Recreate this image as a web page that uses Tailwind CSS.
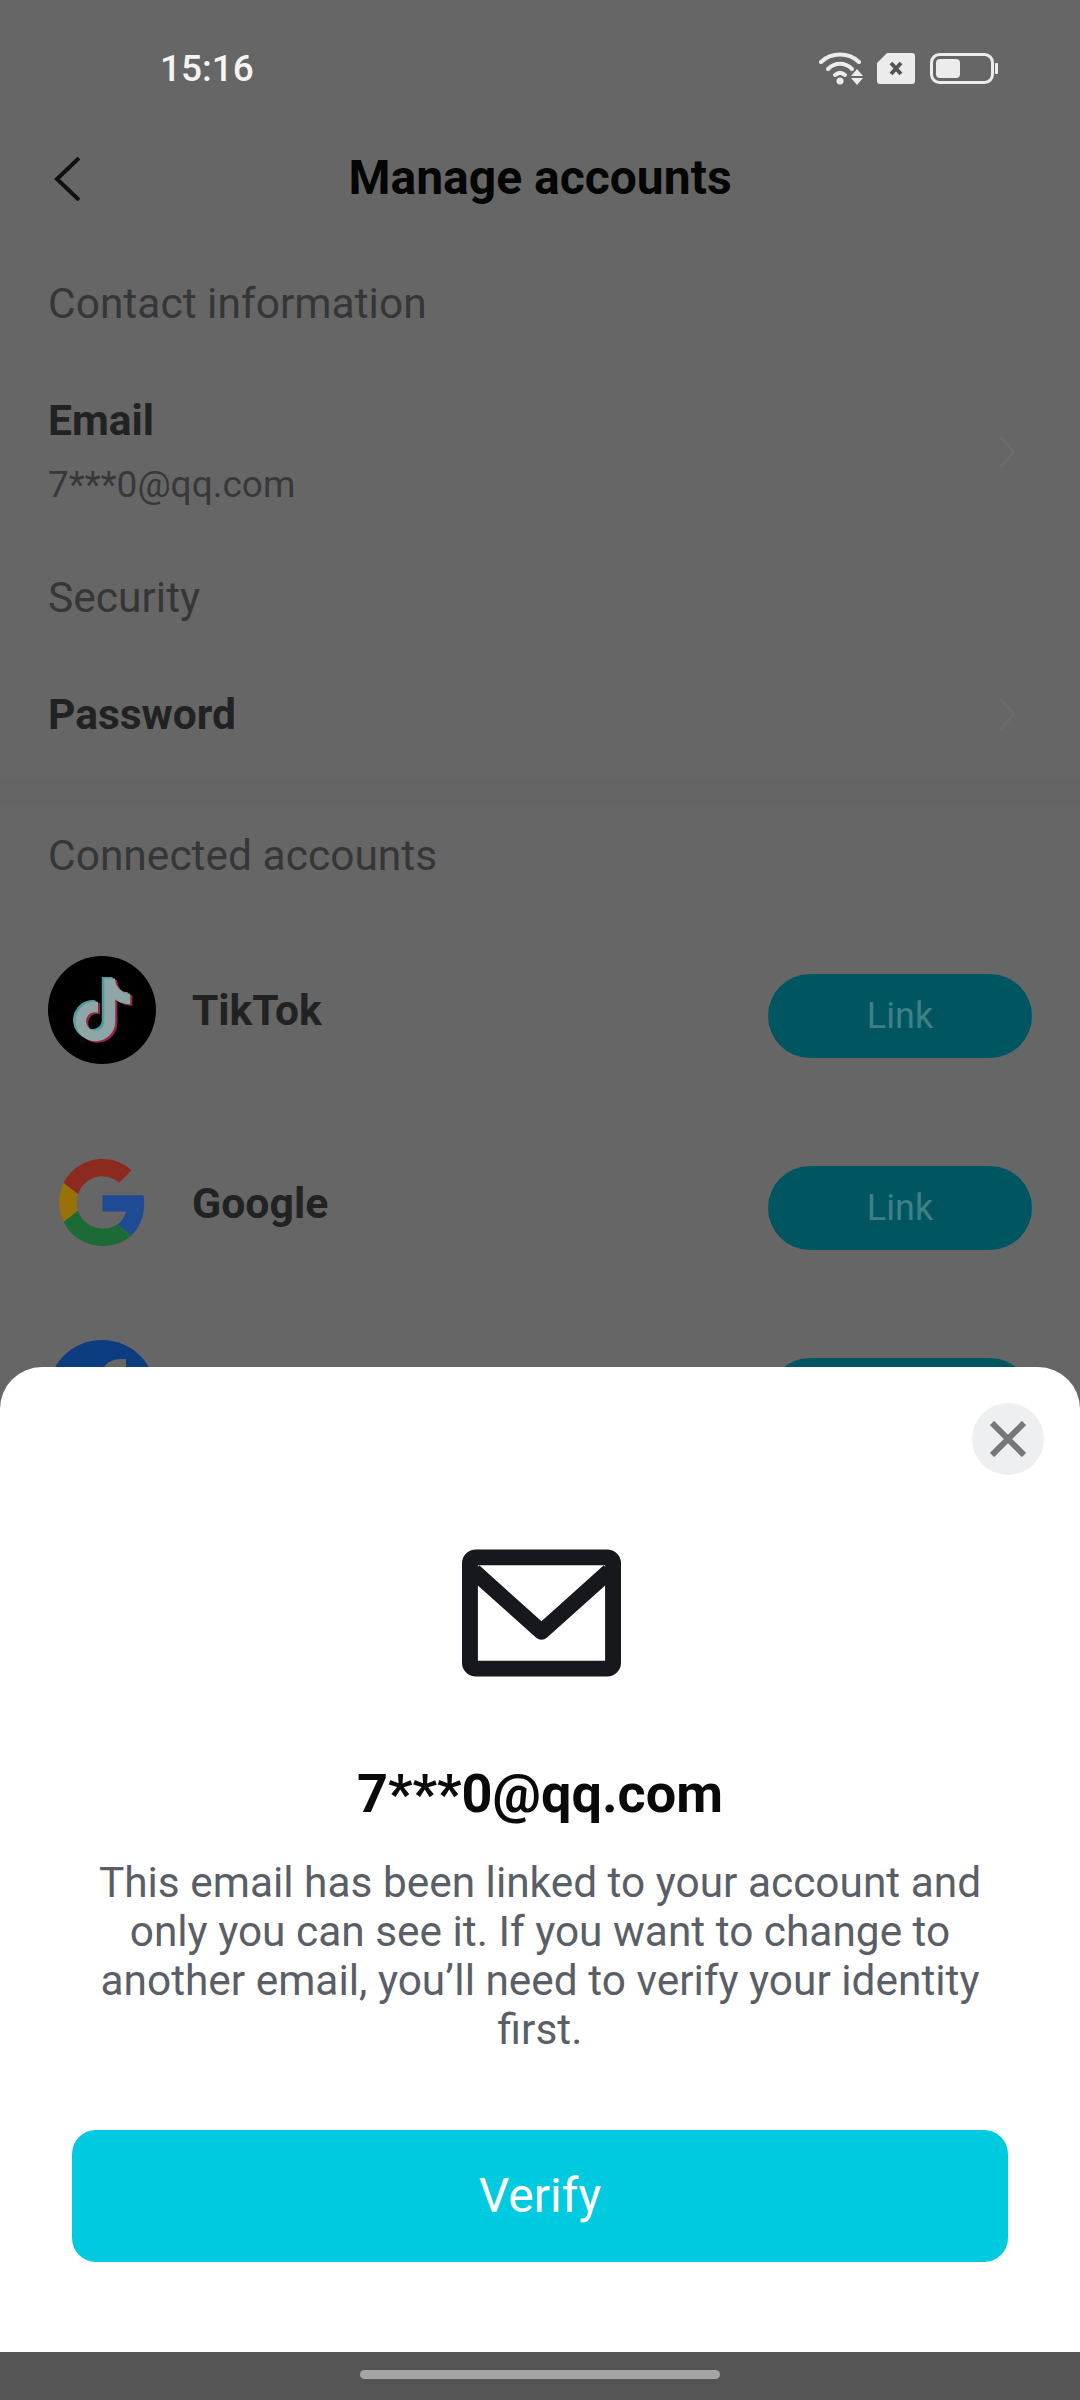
<!DOCTYPE html>
<html lang="en">

<head>
    <meta charset="UTF-8">
    <meta name="viewport" content="width=device-width, initial-scale=1.0">
    <title>Manage accounts</title>
    <script src="https://cdn.jsdelivr.net/npm/@tailwindcss/browser@4"></script>
</head>

<body class="bg-[#666666]">
    <div class="relative w-[1080px] h-[2400px] overflow-hidden font-['Roboto',sans-serif] bg-[#666666]">

        <!-- Status bar -->
        <div class="h-[136px] flex items-center justify-between pl-[160px] pr-[82px]">
            <span class="pt-[2px] text-[37px] font-medium text-[#f5f5f5]">15:16</span>
            <div class="flex items-center">
                <svg width="46" height="36" viewBox="0 0 46 36" fill="none" stroke="#ececec" stroke-width="4" stroke-linecap="round">
                    <path d="M2 12C12 2 30 2 40 12" />
                    <path d="M9 19C16 12 26 12 33 19" />
                    <path d="M16 25C19.500 22 22.500 22 26 25" />
                    <circle cx="21" cy="31" r="3.500" fill="#ececec" stroke="none" />
                    <path d="M38 19L44 26H32Z" fill="#ececec" stroke="none" />
                    <path d="M32 28H44L38 35Z" fill="#ececec" stroke="none" />
                </svg>
                <svg class="ml-[12px]" width="38" height="31" viewBox="0 0 38 31">
                    <path d="M10 0H35A3 3 0 0 1 38 3V28A3 3 0 0 1 35 31H3A3 3 0 0 1 0 28V10Z" fill="#ececec" />
                    <path d="M14 10L24 21M24 10L14 21" stroke="#555555" stroke-width="4" />
                </svg>
                <svg class="ml-[15px]" width="68" height="31" viewBox="0 0 68 31" fill="none">
                    <rect x="1.500" y="1.500" width="61" height="28" rx="8" stroke="#ececec" stroke-width="3" />
                    <rect x="6" y="6" width="24" height="19" rx="4" fill="#ececec" />
                    <rect x="65" y="10" width="3" height="11" rx="1" fill="#ececec" />
                </svg>
            </div>
        </div>

        <!-- Titulo -->
        <div class="relative h-[84px] flex items-center justify-center">
            <svg class="absolute left-[52px] top-[21px]" width="30" height="44" viewBox="0 0 30 44" fill="none" stroke="#111111" stroke-width="4">
                <path d="M27 1L5 22L27 43" />
            </svg>
            <h1 class="text-[48px] font-bold text-[#050505]">Manage accounts</h1>
        </div>

        <!-- Contact information -->
        <div class="mt-[43px] px-[48px] pt-[2px] h-[80px] flex items-center text-[42.500px] text-[#363638]">Contact information</div>
        <div class="mt-[45px] pl-[48px] pr-[64px] h-[128px] flex items-center justify-between">
            <div>
                <p class="pt-[2px] h-[64px] flex items-center text-[42.500px] font-bold text-[#222222]">Email</p>
                <p class="pt-[2px] h-[64px] flex items-center text-[37px] text-[#38383a]">7***0@qq.com</p>
            </div>
            <svg width="18" height="32" viewBox="0 0 18 32" fill="none" stroke="#6c6c6c" stroke-width="3">
                <path d="M2 1L16 16L2 31" />
            </svg>
        </div>

        <!-- Security -->
        <div class="mt-[41px] px-[48px] pt-[2px] h-[80px] flex items-center text-[42.500px] text-[#363638]">Security</div>
        <div class="mt-[45px] pl-[48px] pr-[64px] h-[64px] flex items-center justify-between">
            <p class="pt-[2px] text-[42.500px] font-bold text-[#222222]">Password</p>
            <svg width="18" height="32" viewBox="0 0 18 32" fill="none" stroke="#6c6c6c" stroke-width="3">
                <path d="M2 1L16 16L2 31" />
            </svg>
        </div>

        <div class="mt-[33px] h-[24px] bg-[#646464]"></div>

        <!-- Connected accounts -->
        <div class="mt-[12px] px-[48px] pt-[2px] h-[80px] flex items-center text-[42.500px] text-[#363638]">Connected accounts</div>

        <div class="mt-[61px] px-[48px] flex flex-col gap-[84px]">
            <div class="h-[108px] flex items-center">
                <div class="w-[108px] h-[108px] rounded-full bg-black flex items-center justify-center">
                    <svg width="69" height="69" viewBox="0.800 1.200 22 22">
                        <path fill="#4f9c9f" transform="translate(-.8 -.5)" d="M19.590 6.690a4.830 4.830 0 0 1-3.770-4.250V2h-3.450v13.670a2.890 2.890 0 0 1-5.200 1.740 2.890 2.890 0 0 1 2.310-4.640 2.930 2.930 0 0 1 .88.130V9.400a6.840 6.840 0 0 0-1-.05A6.330 6.330 0 0 0 5 20.100a6.340 6.340 0 0 0 10.860-4.430v-7a8.160 8.160 0 0 0 4.770 1.520v-3.400a4.850 4.850 0 0 1-1-.1z" />
                        <path fill="#96284a" transform="translate(.7 .5)" d="M19.590 6.690a4.830 4.830 0 0 1-3.770-4.250V2h-3.450v13.670a2.890 2.890 0 0 1-5.200 1.740 2.890 2.890 0 0 1 2.310-4.640 2.930 2.930 0 0 1 .88.130V9.400a6.840 6.840 0 0 0-1-.05A6.330 6.330 0 0 0 5 20.100a6.340 6.340 0 0 0 10.860-4.430v-7a8.160 8.160 0 0 0 4.770 1.520v-3.400a4.850 4.850 0 0 1-1-.1z" />
                        <path fill="#8fa6a6" d="M19.590 6.690a4.830 4.830 0 0 1-3.770-4.250V2h-3.450v13.670a2.890 2.890 0 0 1-5.200 1.740 2.890 2.890 0 0 1 2.310-4.640 2.930 2.930 0 0 1 .88.130V9.400a6.840 6.840 0 0 0-1-.05A6.330 6.330 0 0 0 5 20.100a6.340 6.340 0 0 0 10.860-4.430v-7a8.160 8.160 0 0 0 4.770 1.520v-3.400a4.850 4.850 0 0 1-1-.1z" />
                    </svg>
                </div>
                <span class="ml-[36px] pt-[2px] text-[42.500px] font-bold text-[#222222]">TikTok</span>
                <button class="ml-auto mt-[12px] w-[264px] h-[84px] rounded-full bg-[#005660] text-[36px] text-[#3f8087]">Link</button>
            </div>
            <div class="h-[108px] flex items-center">
                <div class="w-[108px] h-[108px] flex items-center justify-center">
                    <svg width="87" height="87" viewBox="0 0 48 48">
                        <path fill="#8c2a20" d="M24 9.500c3.540 0 6.710 1.220 9.210 3.600l6.850-6.850C35.900 2.380 30.470 0 24 0 14.620 0 6.510 5.380 2.560 13.220l7.980 6.190C12.430 13.720 17.740 9.500 24 9.500z" />
                        <path fill="#1f4a94" d="M46.980 24.550c0-1.570-.15-3.090-.38-4.550H24v9.020h12.940c-.58 2.960-2.260 5.480-4.780 7.180l7.730 6c4.510-4.180 7.090-10.360 7.090-17.650z" />
                        <path fill="#967208" d="M10.530 28.590c-.5-1.450-.78-2.990-.78-4.590s.27-3.140.78-4.590l-7.980-6.190C.92 16.460 0 20.120 0 24c0 3.880.92 7.540 2.560 10.780l7.970-6.190z" />
                        <path fill="#1c6a35" d="M24 48c6.480 0 11.930-2.130 15.890-5.810l-7.730-6c-2.150 1.450-4.920 2.300-8.160 2.300-6.260 0-11.570-4.220-13.470-9.910l-7.980 6.190C6.510 42.620 14.620 48 24 48z" />
                    </svg>
                </div>
                <span class="ml-[36px] pt-[2px] text-[42.800px] font-bold text-[#222222]">Google</span>
                <button class="ml-auto mt-[12px] w-[264px] h-[84px] rounded-full bg-[#005660] text-[36px] text-[#3f8087]">Link</button>
            </div>
            <div class="h-[108px] flex items-center">
                <div class="w-[108px] h-[108px] rounded-full bg-[#0c3d80] flex justify-center items-start overflow-hidden">
                    <div class="mt-[19px] ml-[22px] w-[26px] h-[26px] rounded-tl-[20px] border-t-[10px] border-l-[10px] border-[#666666]"></div>
                </div>
                <span class="ml-[36px] text-[42.500px] font-bold text-[#222222]">Facebook</span>
                <button class="ml-auto mt-[12px] w-[264px] h-[84px] rounded-full bg-[#005660] text-[36px] text-[#3f8087]">Link</button>
            </div>
        </div>

        <!-- Hoja inferior -->
        <div class="absolute left-0 top-[1367px] w-[1080px] h-[985px] bg-white rounded-t-[42px] flex flex-col items-center">
            <button class="absolute left-[972px] top-[36px] w-[72px] h-[72px] rounded-full bg-[#eeeff1] flex items-center justify-center">
                <svg width="36" height="36" viewBox="0 0 36 36" fill="none" stroke="#75777c" stroke-width="6">
                    <path d="M2 2L34 34M34 2L2 34" />
                </svg>
            </button>
            <svg class="mt-[182px] ml-[2px]" width="159" height="128" viewBox="0 0 160 128" fill="none">
                <rect x="8" y="8" width="144" height="112" rx="6" stroke="#16181e" stroke-width="16" />
                <path d="M12 22L80 83L148 22" stroke="#16181e" stroke-width="16" stroke-linejoin="round" />
            </svg>
            <h2 class="mt-[86px] h-[60px] flex items-center text-[54px] font-bold text-[#0a0a0a]">7***0@qq.com</h2>
            <p class="mt-[34px] w-[900px] pt-[1px] text-center text-[42.400px] leading-[49px] text-[#5a5e66]">This email has been linked to your account and only you can see it. If you want to change to another email, you’ll need to verify your identity first.</p>
            <button class="mt-[76px] w-[936px] h-[132px] rounded-[24px] bg-[#00cae0] text-[48px] text-white">Verify</button>
        </div>

        <!-- Barra de navegacion -->
        <div class="absolute left-0 top-[2352px] w-[1080px] h-[48px] bg-[#555555] flex justify-center pt-[18px]">
            <div class="w-[360px] h-[9px] rounded-full bg-[#a5a5a5]"></div>
        </div>
    </div>
</body>

</html>
